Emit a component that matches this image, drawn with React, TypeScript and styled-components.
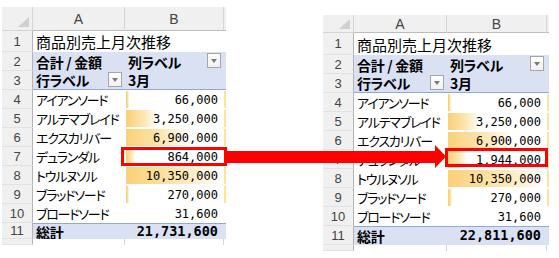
import React from 'react';
import styled, { createGlobalStyle, css } from 'styled-components';

const GlobalStyle = createGlobalStyle`
  html, body {
    margin: 0;
    padding: 0;
    background: #ffffff;
  }
  body {
    width: 559px;
    height: 258px;
    overflow: hidden;
    font-family: "Noto Sans CJK JP", "Noto Sans", sans-serif;
  }
`;

const HEAD_BG = '#f0f0f0';
const HEAD_LINE = '#d4d4d4';
const PIVOT_BLUE = '#d9e1f2';
const PIVOT_LINE = '#8ea9db';
const RED = '#ff0000';

interface Row {
  label: string;
  value: number;
}

interface SheetProps {
  top: number;
  left: number;
  headerH: number;
  row1H: number;
  lastH: number;
  cols: number[];
  rows: Row[];
  total: number;
  highlight: number;
  boxInset: [number, number, number, number];
}

const Page = styled.div`
  position: relative;
  display: flex;
  align-items: flex-start;
  width: 559px;
  height: 258px;
`;

const Grid = styled.div<{ $top: number; $left: number; $cols: string; $rows: string }>`
  display: grid;
  margin-top: ${p => p.$top}px;
  margin-left: ${p => p.$left}px;
  grid-template-columns: ${p => p.$cols};
  grid-template-rows: ${p => p.$rows};
`;

const Corner = styled.div`
  position: relative;
  background: ${HEAD_BG};
  border-right: 1px solid ${HEAD_LINE};
  border-bottom: 1px solid ${HEAD_LINE};
  &::after {
    content: '';
    position: absolute;
    right: 3px;
    bottom: 3px;
    width: 0;
    height: 0;
    border-left: 11px solid transparent;
    border-bottom: 10px solid #d0d0d0;
  }
`;

const ColHead = styled.div<{ $last?: boolean }>`
  display: flex;
  align-items: center;
  justify-content: center;
  background: ${HEAD_BG};
  border-right: ${p => (p.$last ? 'none' : `1px solid ${HEAD_LINE}`)};
  border-bottom: 1px solid #bdbdbd;
  font-family: "Liberation Sans", sans-serif;
  font-size: 14px;
  line-height: 1;
  color: #444;
`;

const RowHead = styled.div`
  display: flex;
  align-items: center;
  justify-content: center;
  background: ${HEAD_BG};
  border-right: 1px solid #b4b4b4;
  border-bottom: 1px solid #e2e2e2;
  font-family: "Liberation Sans", sans-serif;
  font-size: 13px;
  line-height: 1;
  color: #444;
`;

const Cell = styled.div<{ $blue?: boolean; $topLine?: boolean; $bottomLine?: boolean; $bold?: boolean; $gridEdge?: boolean }>`
  position: relative;
  display: flex;
  align-items: center;
  min-width: 0;
  white-space: nowrap;
  padding-left: 3px;
  background: ${p => (p.$blue ? PIVOT_BLUE : '#ffffff')};
  font-size: ${p => (p.$bold ? 14 : 13)}px;
  line-height: 1;
  font-weight: ${p => (p.$bold ? 700 : 400)};
  letter-spacing: ${p => (p.$bold ? '-0.3px' : '-1.2px')};
  font-feature-settings: "palt";
  color: #000;
  ${p => p.$topLine && css`border-top: 1px solid ${PIVOT_LINE};`}
  ${p => p.$bottomLine && css`border-bottom: 1px solid ${PIVOT_LINE};`}
  ${p => p.$gridEdge && css`border-right: 1px solid ${HEAD_LINE};`}
`;

const Title = styled(Cell)`
  font-size: 15px;
  letter-spacing: 0;
  font-feature-settings: normal;
  z-index: 1;
`;

const NumCell = styled.div<{ $blue?: boolean; $topLine?: boolean }>`
  position: relative;
  display: flex;
  align-items: center;
  justify-content: flex-end;
  padding-right: 6px;
  background: ${p => (p.$blue ? PIVOT_BLUE : '#ffffff')};
  ${p => p.$topLine && css`border-top: 1px solid ${PIVOT_LINE};`}
`;

const Num = styled.span<{ $bold?: boolean }>`
  position: relative;
  font-family: "DejaVu Sans Mono", "Liberation Mono", monospace;
  font-size: ${p => (p.$bold ? 13.5 : 12)}px;
  line-height: 1;
  font-weight: ${p => (p.$bold ? 700 : 400)};
  color: #000;
`;

const Bar = styled.div`
  position: absolute;
  left: 1px;
  top: 1px;
  bottom: 1px;
  background: linear-gradient(to right, #fad17a 0%, #fde6b0 55%, #ffffff 100%);
  border-left: 1px solid #fad17a;
`;

const Edge = styled.div<{ $fill: string; $topLine?: boolean; $bottomLine?: boolean; $inset?: boolean }>`
  background: ${p => p.$fill};
  ${p => p.$topLine && css`border-top: 1px solid ${PIVOT_LINE};`}
  ${p => p.$bottomLine && css`border-bottom: 1px solid ${PIVOT_LINE};`}
  margin: ${p => (p.$inset ? '1px 0' : 0)};
`;

const Drop = styled.div`
  position: absolute;
  right: 3px;
  top: 1px;
  width: 14px;
  height: 15px;
  box-sizing: border-box;
  border: 1px solid #a6a6a6;
  background: linear-gradient(#ffffff, #f1f1f1);
  &::after {
    content: '';
    position: absolute;
    left: 3px;
    top: 5px;
    border-left: 3.5px solid transparent;
    border-right: 3.5px solid transparent;
    border-top: 4px solid #7a7a7a;
  }
`;

const RedBox = styled.div<{ $l: number; $r: number; $t: number; $b: number }>`
  position: absolute;
  left: ${p => p.$l}px;
  right: ${p => p.$r}px;
  top: ${p => p.$t}px;
  bottom: ${p => p.$b}px;
  border: 3px solid ${RED};
  pointer-events: none;
  z-index: 2;
`;

const Arrow = styled.svg`
  position: absolute;
  left: 0;
  top: 0;
  z-index: 3;
`;

const fmt = (n: number) => n.toLocaleString('en-US');

const Sheet: React.FC<SheetProps> = ({
  top, left, headerH, row1H, lastH, cols, rows, total, highlight, boxInset,
}) => {
  const max = Math.max(...rows.map(r => r.value));
  const barSpan = cols[2] - 4;
  const rowTemplate = [headerH, row1H, ...Array(9).fill(19), lastH, 6].map(h => `${h}px`).join(' ');
  const [bl, br, bt, bb] = boxInset;

  return (
    <Grid $top={top} $left={left} $cols={cols.map(c => `${c}px`).join(' ')} $rows={rowTemplate}>
      <Corner />
      <ColHead>A</ColHead>
      <ColHead>B</ColHead>
      <ColHead $last />

      <RowHead>1</RowHead>
      <Title>商品別売上月次推移</Title>
      <Cell />
      <Cell />

      <RowHead>2</RowHead>
      <Cell $blue $bold>合計 / 金額</Cell>
      <Cell $blue $bold>
        列ラベル
        <Drop />
      </Cell>
      <Edge $fill={PIVOT_BLUE} />

      <RowHead>3</RowHead>
      <Cell $blue $bold $bottomLine>
        行ラベル
        <Drop />
      </Cell>
      <Cell $blue $bold $bottomLine>3月</Cell>
      <Edge $fill={PIVOT_BLUE} $bottomLine />

      {rows.map((r, i) => {
        const w = (r.value / max) * barSpan;
        return (
          <React.Fragment key={r.label}>
            <RowHead>{i + 4}</RowHead>
            <Cell>{r.label}</Cell>
            <NumCell>
              {w >= 0.5 && <Bar style={{ width: `${Math.max(w, 1.5)}px` }} />}
              <Num>{fmt(r.value)}</Num>
              {i === highlight && <RedBox $l={bl} $r={br} $t={bt} $b={bb} />}
            </NumCell>
            <Edge $fill={i < 6 ? '#fde2a0' : '#ffffff'} $inset={i < 6} />
          </React.Fragment>
        );
      })}

      <RowHead>11</RowHead>
      <Cell $blue $bold $topLine>総計</Cell>
      <NumCell $blue $topLine>
        <Num $bold>{fmt(total)}</Num>
      </NumCell>
      <Edge $fill={PIVOT_BLUE} $topLine />

      <RowHead />
      <Cell $gridEdge />
      <Cell $gridEdge />
      <Cell />
    </Grid>
  );
};

const before: Row[] = [
  { label: 'アイアンソード', value: 66000 },
  { label: 'アルテマブレイド', value: 3250000 },
  { label: 'エクスカリバー', value: 6900000 },
  { label: 'デュランダル', value: 864000 },
  { label: 'トウルヌソル', value: 10350000 },
  { label: 'ブラッドソード', value: 270000 },
  { label: 'ブロードソード', value: 31600 },
];

const after: Row[] = before.map(r => (r.label === 'デュランダル' ? { ...r, value: 1944000 } : r));

const App: React.FC = () => (
  <>
    <GlobalStyle />
    <Page>
      <Sheet
        top={7}
        left={2}
        headerH={24}
        row1H={21}
        lastH={16}
        cols={[31, 92, 99, 2]}
        rows={before}
        total={21731600}
        highlight={3}
        boxInset={[-4, -3, 0, 0]}
      />
      <Sheet
        top={15}
        left={97}
        headerH={18}
        row1H={22}
        lastH={19}
        cols={[31, 93, 100, 2]}
        rows={after}
        total={22811600}
        highlight={3}
        boxInset={[-2, -1, -2, 2]}
      />
      <Arrow width="559" height="258" viewBox="0 0 559 258">
        <polygon points="226,151 435,151 435,145 446,156.5 435,168 435,163 226,163" fill={RED} />
      </Arrow>
    </Page>
  </>
);

export default App;
